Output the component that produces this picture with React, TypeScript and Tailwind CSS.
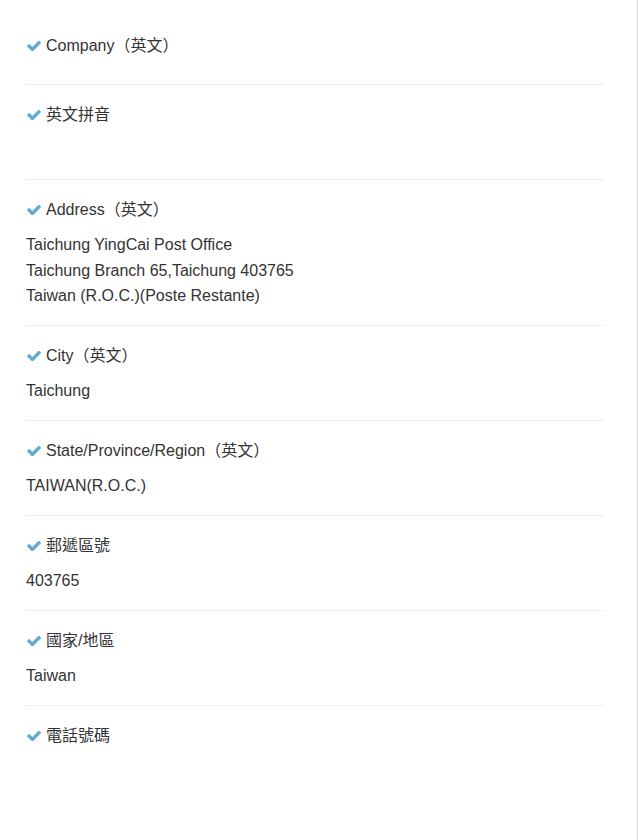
import { ReactNode } from 'react'

type Field = {
  label: ReactNode
  value?: string[]
  empty?: boolean
}

const fields: Field[] = [
  { label: 'Company（英文）' },
  { label: '英文拼音', empty: true },
  {
    label: 'Address（英文）',
    value: [
      'Taichung YingCai Post Office',
      'Taichung Branch 65,Taichung 403765',
      'Taiwan (R.O.C.)(Poste Restante)',
    ],
  },
  { label: 'City（英文）', value: ['Taichung'] },
  { label: 'State/Province/Region（英文）', value: ['TAIWAN(R.O.C.)'] },
  { label: '郵遞區號', value: ['403765'] },
  { label: '國家/地區', value: ['Taiwan'] },
  { label: '電話號碼', empty: true },
]

function Check() {
  return (
    <svg viewBox="110 350 1570 1120" className="ml-[1px] h-[10px] w-[14px] shrink-0 fill-[#62acd4]">
      <path d="M1671 566q0 40-28 68l-724 724-136 136q-28 28-68 28t-68-28l-136-136-362-362q-28-28-28-68t28-68l136-136q28-28 68-28t68 28l294 295 656-657q28-28 68-28t68 28l136 136q28 28 28 68z" />
    </svg>
  )
}

export default function App() {
  return (
    <div
      className="min-h-screen w-full border-r border-[#d4d4d4] bg-white pt-[16px] pr-[32px] pl-[26px] text-[16px] text-[#333]"
      style={{ fontFamily: '"Liberation Sans", "Noto Sans CJK TC", sans-serif' }}
    >
      {fields.map((f, i) => {
        const last = i === fields.length - 1
        const noValue = !f.value && !f.empty
        return (
          <div
            key={i}
            className={
              (last ? '' : 'border-b border-[#eeeeee] ') +
              (noValue ? 'pt-[18px] pb-[26px]' : 'pt-[18px] pb-[16.5px]')
            }
          >
            <div className="flex h-6 items-center gap-[5px] leading-6">
              <Check />
              <span>{f.label}</span>
            </div>
            {f.value && (
              <div className="mt-[10px] leading-[25.5px]">
                {f.value.map(line => (
                  <div key={line}>{line}</div>
                ))}
              </div>
            )}
            {f.empty && <div className="mt-[10px] h-[25.5px]" />}
          </div>
        )
      })}
    </div>
  )
}
